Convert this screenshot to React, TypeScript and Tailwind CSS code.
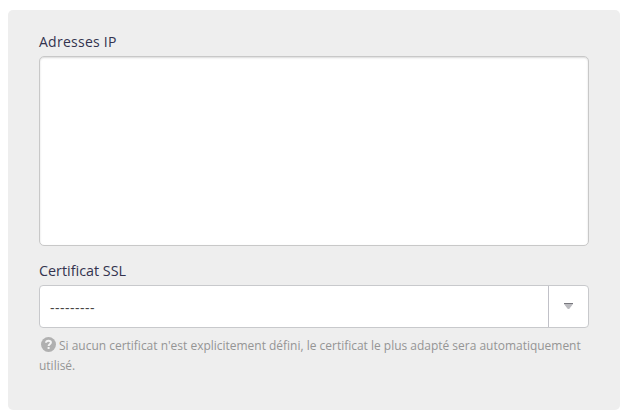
export default function App() {
  return (
    <div className="h-[419px] w-[629px] bg-white pl-2 pt-[10px] font-['Open_Sans',sans-serif]">
      <form className="h-[400px] w-[612px] rounded-[5px] bg-[#eeeeee] px-[31px] pt-[22px]">
        <label htmlFor="ips" className="block h-6 text-[14px] leading-[20px] tracking-[0.26px] text-[#33334f]">Adresses IP</label>
        <textarea id="ips" className="block h-[190px] w-[550px] resize-none rounded-[5px] border border-[#c8c8c8] bg-white shadow-[inset_0_1px_2px_rgba(0,0,0,0.15)] outline-none" />
        <label className="mt-[15px] block h-6 text-[14.35px] leading-[20px] text-[#33334f]">Certificat SSL</label>
        <div className="flex h-[43px] w-[550px] rounded-[4px] border border-[#c8c9cc] bg-white">
          <div className="flex-1 pl-[10px] text-[14px] leading-[43px] tracking-[0.49px] text-[#444444]">---------</div>
          <div className="flex w-10 border-l border-[#c1c1c8] pl-[15px] pt-[17px]">
            <svg width="9" height="6" viewBox="0 0 9 6"><path d="M0 1h9L5.2 6H3.8z" fill="#bbbbbf" /><path d="M0 0h9v1H0z" fill="#77777d" /></svg>
          </div>
        </div>
        <p className="mt-2 text-[11.97px] leading-[20px] text-[#959595]">
          <svg className="ml-[2px] mr-[3px] inline-block align-[-2px]" width="15" height="15" viewBox="0 0 15 15">
            <circle cx="7.5" cy="7.5" r="7.5" fill="#b0b0b0" />
            <path d="M5 5.8C5.2 3.1 9.9 3.3 9.9 5.6C9.9 7.2 7.6 7.2 7.6 9" fill="none" stroke="#f4f4f4" strokeWidth="2" />
            <path d="M6.6 10h2v2h-2z" fill="#f4f4f4" />
          </svg>
          Si aucun certificat n'est explicitement défini, le certificat le plus adapté sera automatiquement utilisé.
        </p>
      </form>
    </div>
  );
}
